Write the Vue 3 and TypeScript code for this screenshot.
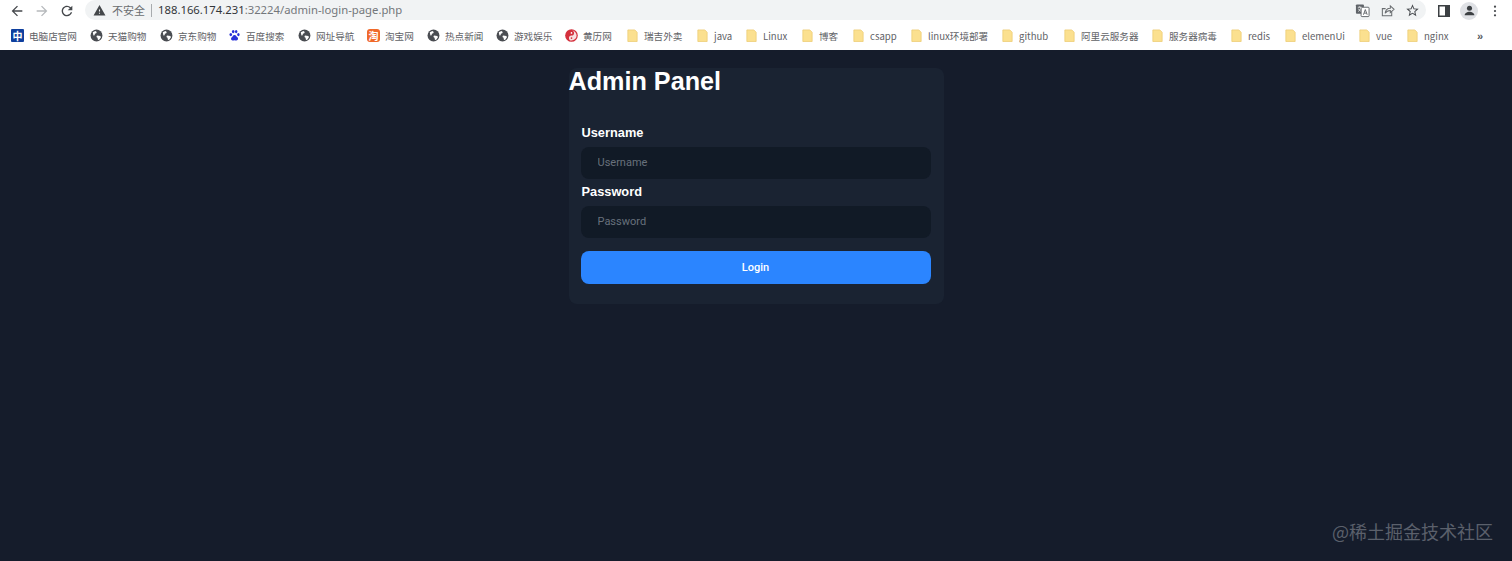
<script setup lang="ts">
interface Bookmark { label: string; icon: string; width: number }
const bookmarks: Bookmark[] = [
  { label: '电脑店官网', icon: 'dnd', width: 79 },
  { label: '天猫购物', icon: 'globe', width: 70 },
  { label: '京东购物', icon: 'globe', width: 68 },
  { label: '百度搜索', icon: 'baidu', width: 70 },
  { label: '网址导航', icon: 'globe', width: 69 },
  { label: '淘宝网', icon: 'taobao', width: 60 },
  { label: '热点新闻', icon: 'globe', width: 69 },
  { label: '游戏娱乐', icon: 'globe', width: 69 },
  { label: '黄历网', icon: 'huangli', width: 61 },
  { label: '瑞吉外卖', icon: 'folder', width: 70 },
  { label: 'java', icon: 'folder', width: 49 },
  { label: 'Linux', icon: 'folder', width: 56 },
  { label: '博客', icon: 'folder', width: 51 },
  { label: 'csapp', icon: 'folder', width: 58 },
  { label: 'linux环境部署', icon: 'folder', width: 91 },
  { label: 'github', icon: 'folder', width: 62 },
  { label: '阿里云服务器', icon: 'folder', width: 88 },
  { label: '服务器病毒', icon: 'folder', width: 79 },
  { label: 'redis', icon: 'folder', width: 54 },
  { label: 'elemenUi', icon: 'folder', width: 74 },
  { label: 'vue', icon: 'folder', width: 48 },
  { label: 'nginx', icon: 'folder', width: 56 }
]
</script>

<template>
  <div class="page">
    <header class="chrome">
      <div class="toolbar">
        <div class="nav">
          <svg class="tb-icon dark" viewBox="0 0 24 24"><path d="M20 11H7.83l5.59-5.59L12 4l-8 8 8 8 1.41-1.41L7.83 13H20v-2z" /></svg>
          <svg class="tb-icon faded" viewBox="0 0 24 24"><path d="M4 11h12.17l-5.59-5.59L12 4l8 8-8 8-1.41-1.41L16.17 13H4v-2z" /></svg>
          <svg class="tb-icon dark" viewBox="0 0 24 24"><path d="M17.65 6.35A7.958 7.958 0 0 0 12 4c-4.42 0-7.99 3.58-7.99 8s3.57 8 7.99 8c3.73 0 6.84-2.55 7.73-6h-2.08A5.99 5.99 0 0 1 12 18c-3.31 0-6-2.69-6-6s2.69-6 6-6c1.66 0 3.14.69 4.22 1.78L13 11h7V4l-2.35 2.35z" /></svg>
        </div>
        <div class="omnibox">
          <svg class="warn" viewBox="0 0 24 24"><path d="M1 21h22L12 2 1 21zm12-3h-2v-2h2v2zm0-4h-2v-4h2v4z" /></svg>
          <span class="insecure">不安全</span>
          <span class="sep"></span>
          <span class="url"><span class="host">188.166.174.231</span>:32224/admin-login-page.php</span>
          <div class="omni-actions">
            <svg class="act translate" viewBox="0 0 16 16">
              <rect x="1" y="1.5" width="8.5" height="10" rx="1" fill="#5f6368" />
              <rect x="6.5" y="4.5" width="8.5" height="10" rx="1" fill="#fff" stroke="#5f6368" />
              <path d="M3 4.5h4M5 3.5v1M3.5 9c1.5-.8 2.3-2.4 2.7-4.5M3.6 6c.6 1.2 1.5 2.2 2.6 2.8" stroke="#fff" fill="none" stroke-width=".8" />
              <path d="M9 12.5l2-5.5 2 5.5M9.8 10.8h2.4" stroke="#5f6368" fill="none" />
            </svg>
            <svg class="act" viewBox="0 0 16 16" fill="none" stroke="#6a6d70" stroke-width="1.1">
              <path d="M12.5 9v4.5h-10V6H6" />
              <path d="M5.5 11c.3-3.500 2.500-5.500 5.500-5.500V3l4 3.700-4 3.600V8C8.800 8 6.800 9 5.500 11z" />
            </svg>
            <svg class="act" viewBox="0 0 24 24"><path fill="#4a4d51" d="M22 9.24l-7.19-.62L12 2 9.19 8.63 2 9.24l5.46 4.73L5.82 21 12 17.27 18.18 21l-1.63-7.03L22 9.24zM12 15.4l-3.76 2.27 1-4.28-3.32-2.88 4.38-.38L12 6.1l1.71 4.04 4.38.38-3.32 2.88 1 4.28L12 15.4z" /></svg>
          </div>
        </div>
        <div class="window-actions">
          <svg class="panel" viewBox="0 0 12 12">
            <rect x=".75" y=".75" width="10.5" height="10.5" fill="none" stroke="#3c4043" stroke-width="1.5" />
            <rect x="7" y="1" width="4" height="10" fill="#3c4043" />
          </svg>
          <span class="avatar">
            <svg viewBox="0 0 16 16"><circle cx="8" cy="5.6" r="2.7" fill="#3c4043" /><path d="M2.8 13c0-2.4 3-3.7 5.2-3.7s5.2 1.3 5.2 3.7z" fill="#3c4043" /></svg>
          </span>
          <svg class="dots" viewBox="0 0 4 14"><circle cx="2" cy="2" r="1.3" /><circle cx="2" cy="7" r="1.3" /><circle cx="2" cy="12" r="1.3" /></svg>
        </div>
      </div>
      <nav class="bookmarks">
        <div v-for="b in bookmarks" :key="b.label" class="bookmark" :style="{ width: b.width + 'px' }">
          <span v-if="b.icon === 'dnd'" class="logo dnd">中</span>
          <span v-else-if="b.icon === 'taobao'" class="logo taobao">淘</span>
          <svg v-else-if="b.icon === 'globe'" class="bm-icon" viewBox="0 0 14 14">
            <circle cx="7" cy="7" r="6.4" fill="#4a4d52" />
            <path d="M3 3.400l2.800-1.200 1.500 1-.6 1.500-1.500.4-.2 1.600-1.300.3zM7.500 7l3.700.6.6 1.400-1.900 2.500-1.300.3-.5-2.300-1.200-1z" fill="#fff" />
          </svg>
          <svg v-else-if="b.icon === 'baidu'" class="bm-icon" viewBox="0 0 14 14" fill="#2a32d8">
            <ellipse cx="3" cy="6" rx="1.4" ry="1.8" />
            <ellipse cx="5.6" cy="2.8" rx="1.4" ry="1.8" />
            <ellipse cx="8.8" cy="2.8" rx="1.3" ry="1.8" />
            <ellipse cx="11.2" cy="6" rx="1.3" ry="1.7" />
            <path d="M7 6.400c1.600 0 2 1.600 3.200 2.600 1.300 1.200.6 3.600-1.300 3.400-.8-.1-1.200-.4-1.900-.4s-1.200.3-2 .4C3.200 12.600 2.600 10.300 4 9c1.100-1 1.400-2.600 3-2.600z" />
          </svg>
          <svg v-else-if="b.icon === 'huangli'" class="bm-icon huangli" viewBox="0 0 14 14">
            <circle cx="7" cy="7" r="6.8" fill="#d4303c" />
            <path d="M7 1.500a5.500 5.500 0 0 1 0 11 2.750 2.750 0 0 1 0-5.500 2.750 2.750 0 0 0 0-5.500z" fill="#f6dfe0" />
            <circle cx="7" cy="4.200" r=".9" fill="#fff" />
            <circle cx="7" cy="9.800" r=".9" fill="#d4303c" />
          </svg>
          <svg v-else class="bm-icon" viewBox="0 0 14 14">
            <path d="M2 1h7.500l2.500 2.500v10H2z" fill="#fbe08f" stroke="#ecca70" stroke-width=".8" />
          </svg>
          <span class="bm-label">{{ b.label }}</span>
        </div>
        <span class="more">»</span>
      </nav>
    </header>

    <main class="content">
      <form class="card" @submit.prevent>
        <h1 class="title">Admin Panel</h1>
        <label class="label first" for="username">Username</label>
        <input id="username" class="field" type="text" placeholder="Username" />
        <label class="label" for="password">Password</label>
        <input id="password" class="field" type="password" placeholder="Password" />
        <button class="login" type="submit">Login</button>
      </form>
    </main>

    <div class="watermark">@稀土掘金技术社区</div>
  </div>
</template>

<style>
html, body { margin: 0; background: #151c2b; }
</style>

<style scoped>
.page {
  position: relative;
  height: 561px;
  overflow: hidden;
  background: #151c2b;
  font-family: "Liberation Sans", Arial, sans-serif;
}
.chrome { height: 50px; background: #fff; }
.toolbar { display: flex; height: 21px; }
.nav { display: flex; align-items: center; gap: 9px; width: 85px; padding-left: 9px; box-sizing: border-box; }
.tb-icon { width: 16px; height: 16px; flex: none; }
.dark { fill: #45484c; }
.faded { fill: #b6b9bc; }
.omnibox {
  display: flex;
  align-items: center;
  width: 1341px;
  height: 20px;
  box-sizing: border-box;
  padding-left: 8px;
  background: #f1f3f4;
  border-radius: 10px;
}
.warn { width: 13px; height: 13px; fill: #44474a; flex: none; }
.insecure {
  margin-left: 6px;
  font: 11px/20px "Noto Sans CJK SC", sans-serif;
  color: #6a6d70;
}
.sep { width: 1px; height: 13px; margin: 0 6px 0 6px; background: #a8abae; }
.url { font: 11.3px/20px "Noto Sans", sans-serif; color: #74777b; }
.host { color: #33363a; }
.omni-actions { display: flex; align-items: center; gap: 10px; margin-left: auto; padding-right: 6px; }
.act { width: 15px; height: 15px; flex: none; }
.window-actions { display: flex; align-items: center; flex: 1; padding-left: 12px; }
.panel { width: 12px; height: 12px; flex: none; }
.avatar {
  display: flex;
  align-items: center;
  justify-content: center;
  width: 18px;
  height: 18px;
  margin-left: 10px;
  border-radius: 50%;
  background: #dfe1e5;
}
.avatar svg { width: 15px; height: 15px; }
.dots { width: 4px; height: 12px; margin-left: 15px; fill: #45484c; }
.bookmarks { display: flex; align-items: center; height: 29px; padding-left: 11px; }
.bookmark { display: flex; align-items: center; flex: none; gap: 5px; }
.bm-icon { width: 13px; height: 13px; flex: none; }
.logo {
  display: block;
  width: 13px;
  height: 13px;
  flex: none;
  border-radius: 1px;
  color: #fff;
  font: 700 10px/13px "Noto Sans CJK SC", sans-serif;
  text-align: center;
}
.dnd { background: #0e3f9e; }
.taobao { background: #f0692a; border-radius: 3px; }
.bm-label {
  font: 9.6px/14px "Noto Sans CJK SC", sans-serif;
  color: #5f6266;
  white-space: nowrap;
}
.more { margin-left: 15px; font: 700 11px/14px "Liberation Sans", sans-serif; color: #55585c; }
.content { display: flex; justify-content: center; padding-top: 18px; }
.card {
  display: flex;
  flex-direction: column;
  width: 375px;
  box-sizing: border-box;
  padding: 0 13px 20px 12px;
  background: #1a2332;
  border-radius: 8px;
}
.title {
  margin: 0 0 0 -12px;
  font-size: 25.2px;
  line-height: 26px;
  font-weight: 700;
  color: #fff;
}
.label {
  margin-top: 5px;
  margin-bottom: 6px;
  padding-left: 1px;
  font-size: 12.8px;
  line-height: 16px;
  font-weight: 700;
  color: #fff;
}
.first { margin-top: 31px; }
.field {
  display: block;
  width: 100%;
  height: 32px;
  box-sizing: border-box;
  padding: 0 17px 2px;
  border: 0;
  border-radius: 8px;
  outline: 0;
  background: #111a26;
  color: #fff;
  font: 11px Roboto, sans-serif;
}
.field::placeholder { color: #68717c; opacity: 1; }
.login {
  height: 33px;
  margin-top: 13px;
  border: 0;
  border-radius: 8px;
  background: #2b85ff;
  color: #fff;
  font: 500 11px Roboto, sans-serif;
}
.watermark {
  position: absolute;
  right: 19px;
  bottom: 18px;
  font: 18px/24px "Noto Sans CJK SC", sans-serif;
  color: #5b606b;
  white-space: nowrap;
}
</style>
